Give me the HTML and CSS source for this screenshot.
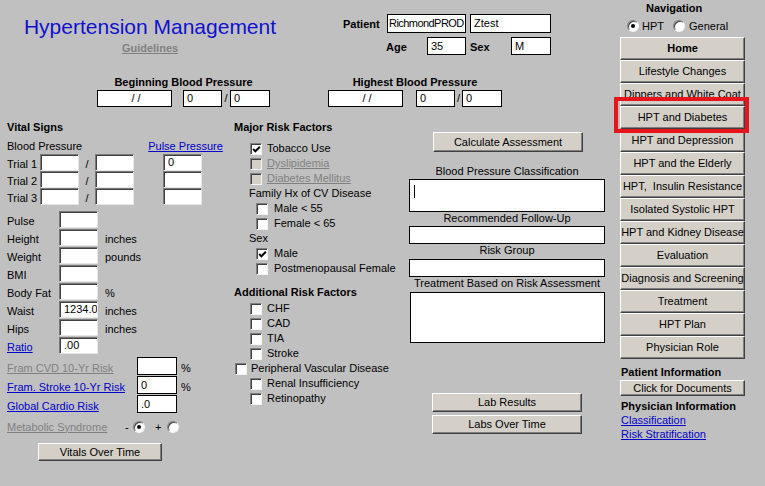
FILE: index.html
```html
<!DOCTYPE html>
<html>
<head>
<meta charset="utf-8">
<title>Hypertension Management</title>
<link rel="stylesheet" href="styles.css">
</head>
<body>
<div class="page">
  <div class="main">
    <header class="top">
      <div class="title-block">
        <h1 class="title">Hypertension Management</h1>
        <a class="guidelines">Guidelines</a>
      </div>
      <div class="patient">
        <div class="prow">
          <span class="plabel pl-patient">Patient</span>
          <span class="pf w79 h19 tight">RichmondPROD</span>
          <span class="pf w81 h19">Ztest</span>
        </div>
        <div class="prow prow2">
          <span class="plabel pl-age">Age</span>
          <span class="pf w39 h18">35</span>
          <span class="plabel pl-sex">Sex</span>
          <span class="pf w40 h18">M</span>
        </div>
      </div>
    </header>

    <section class="bp-row">
      <div class="bp-group bp-begin">
        <div class="bold center">Beginning Blood Pressure</div>
        <div class="bp-inputs">
          <span class="pf w75 h17 center">/ /</span>
          <span class="pf w39 h17 ml11">0</span>
          <span class="slash">/</span>
          <span class="pf w40 h17">0</span>
        </div>
      </div>
      <div class="bp-group bp-high">
        <div class="bold center">Highest Blood Pressure</div>
        <div class="bp-inputs">
          <span class="pf w75 h17 center">/ /</span>
          <span class="pf w39 h17 ml13">0</span>
          <span class="slash">/</span>
          <span class="pf w40 h17">0</span>
        </div>
      </div>
    </section>

    <section class="body">
      <div class="vitals">
        <div class="bold">Vital Signs</div>
        <div class="bp-head">
          <span>Blood Pressure</span>
          <a class="link pp">Pulse Pressure</a>
        </div>
        <div class="trials">
          <div class="trial"><span class="tl">Trial 1</span><span class="vf w39"></span><span class="tslash">/</span><span class="vf w39"></span><span class="vf w39 ml29">0</span></div>
          <div class="trial"><span class="tl">Trial 2</span><span class="vf w39"></span><span class="tslash">/</span><span class="vf w39"></span><span class="vf w39 ml29"></span></div>
          <div class="trial"><span class="tl">Trial 3</span><span class="vf w39"></span><span class="tslash">/</span><span class="vf w39"></span><span class="vf w39 ml29"></span></div>
        </div>
        <div class="measures">
          <div class="mrow"><span class="ml">Pulse</span><span class="vf w39"></span></div>
          <div class="mrow"><span class="ml">Height</span><span class="vf w39"></span><span class="unit">inches</span></div>
          <div class="mrow"><span class="ml">Weight</span><span class="vf w39"></span><span class="unit">pounds</span></div>
          <div class="mrow"><span class="ml">BMI</span><span class="vf w39"></span></div>
          <div class="mrow"><span class="ml">Body Fat</span><span class="vf w39"></span><span class="unit">%</span></div>
          <div class="mrow"><span class="ml">Waist</span><span class="vf w39">1234.0</span><span class="unit">inches</span></div>
          <div class="mrow"><span class="ml">Hips</span><span class="vf w39"></span><span class="unit">inches</span></div>
          <div class="mrow"><span class="ml"><a class="link">Ratio</a></span><span class="vf w39">.00</span></div>
        </div>
        <div class="risks-calc">
          <div class="frow"><span class="fl"><a class="dis-link">Fram CVD 10-Yr Risk</a></span><span class="pf w40 h18"></span><span class="pct">%</span></div>
          <div class="frow"><span class="fl"><a class="link">Fram. Stroke 10-Yr Risk</a></span><span class="pf w40 h18">0</span><span class="pct">%</span></div>
          <div class="frow"><span class="fl"><a class="link">Global Cardio Risk</a></span><span class="pf w40 h18">.0</span></div>
        </div>
        <div class="meta">
          <a class="dis-link meta-l">Metabolic Syndrome</a>
          <span class="sign">-</span>
          <span class="radio on"></span>
          <span class="sign plus">+</span>
          <span class="radio"></span>
        </div>
        <div class="btn vot">Vitals Over Time</div>
      </div>

      <div class="risks">
        <div class="bold">Major Risk Factors</div>
        <div class="cblist">
          <div class="cbrow l1"><span class="cb on"><svg viewBox="0 0 8 8"><path d="M1 3.6 L3 5.6 L7 1.6"/></svg></span>Tobacco Use</div>
          <div class="cbrow l1"><span class="cb dis"></span><a class="dis-link">Dyslipidemia</a></div>
          <div class="cbrow l1"><span class="cb dis"></span><a class="dis-link">Diabetes Mellitus</a></div>
          <div class="cbrow lt">Family Hx of CV Disease</div>
          <div class="cbrow l2"><span class="cb"></span>Male &lt; 55</div>
          <div class="cbrow l2"><span class="cb"></span>Female &lt; 65</div>
          <div class="cbrow lt">Sex</div>
          <div class="cbrow l2"><span class="cb on"><svg viewBox="0 0 8 8"><path d="M1 3.6 L3 5.6 L7 1.6"/></svg></span>Male</div>
          <div class="cbrow l2"><span class="cb"></span>Postmenopausal Female</div>
        </div>
        <div class="bold add-title">Additional Risk Factors</div>
        <div class="cblist add-list">
          <div class="cbrow l1"><span class="cb"></span>CHF</div>
          <div class="cbrow l1"><span class="cb"></span>CAD</div>
          <div class="cbrow l1"><span class="cb"></span>TIA</div>
          <div class="cbrow l1"><span class="cb"></span>Stroke</div>
          <div class="cbrow l0"><span class="cb"></span>Peripheral Vascular Disease</div>
          <div class="cbrow l1"><span class="cb"></span>Renal Insufficiency</div>
          <div class="cbrow l1"><span class="cb"></span>Retinopathy</div>
        </div>
      </div>

      <div class="results">
        <div class="btn calc">Calculate Assessment</div>
        <div class="rlabel first">Blood Pressure Classification</div>
        <div class="rbox h33"><span class="caret"></span></div>
        <div class="rlabel">Recommended Follow-Up</div>
        <div class="rbox h18"></div>
        <div class="rlabel">Risk Group</div>
        <div class="rbox h18 mt2"></div>
        <div class="rlabel">Treatment Based on Risk Assessment</div>
        <div class="rbox h51 mt2 shift"></div>
        <div class="btn lab first-lab">Lab Results</div>
        <div class="btn lab">Labs Over Time</div>
      </div>
    </section>
  </div>

  <nav class="nav">
    <div class="bold nav-title">Navigation</div>
    <div class="nav-radios">
      <span class="radio on"></span><span class="rtext">HPT</span>
      <span class="radio r2"></span><span class="rtext">General</span>
    </div>
    <div class="nav-buttons">
      <div class="btn nb bold">Home</div>
      <div class="btn nb">Lifestyle Changes</div>
      <div class="btn nb">Dippers and White Coat</div>
      <div class="btn nb hl">HPT and Diabetes<span class="highlight"></span></div>
      <div class="btn nb">HPT and Depression</div>
      <div class="btn nb">HPT and the Elderly</div>
      <div class="btn nb">HPT,&nbsp; Insulin Resistance</div>
      <div class="btn nb">Isolated Systolic HPT</div>
      <div class="btn nb">HPT and Kidney Disease</div>
      <div class="btn nb">Evaluation</div>
      <div class="btn nb">Diagnosis and Screening</div>
      <div class="btn nb">Treatment</div>
      <div class="btn nb">HPT Plan</div>
      <div class="btn nb">Physician Role</div>
    </div>
    <div class="bold pi-title">Patient Information</div>
    <div class="btn docs">Click for Documents</div>
    <div class="bold phys-title">Physician Information</div>
    <a class="link nav-link">Classification</a>
    <a class="link nav-link">Risk Stratification</a>
  </nav>
</div>
</body>
</html>
```

FILE: styles.css
```css
* { box-sizing: border-box; }

html, body {
  margin: 0;
  padding: 0;
}

body {
  width: 765px;
  height: 486px;
  overflow: hidden;
  background: #c0c0c0;
  font-family: "Liberation Sans", Arial, sans-serif;
  font-size: 11px;
  line-height: 13px;
  color: #000;
}

.page { display: flex; }
.main { width: 620px; flex: none; }

.bold { font-weight: bold; }
.center { text-align: center; justify-content: center; }

.link { color: #0000c8; text-decoration: underline; white-space: nowrap; }
.dis-link { color: #808080; text-decoration: underline; white-space: nowrap; }

/* ---------- header ---------- */
.top {
  display: flex;
  align-items: flex-start;
  height: 63px;
}
.title-block {
  margin: 15px 0 0 20px;
  width: 260px;
  text-align: center;
}
.title {
  margin: 0;
  font-size: 21px;
  line-height: 24px;
  font-weight: normal;
  color: #1010d0;
  white-space: nowrap;
}
.guidelines {
  display: inline-block;
  margin-top: 3px;
  font-weight: bold;
  color: #808080;
  text-decoration: underline;
}
.patient {
  margin: 14px 0 0 63px;
  display: flex;
  flex-direction: column;
  gap: 4px;
}
.prow { display: flex; align-items: center; }
.prow2 { padding-left: 43px; }
.plabel { font-weight: bold; white-space: nowrap; padding-top: 2px; }
.pl-patient { width: 44px; }
.pl-age { width: 41px; }
.pl-sex { width: 41px; margin-left: 4px; }
.prow .pf + .pf { margin-left: 4px; }

/* generic fields */
.pf {
  display: flex;
  align-items: center;
  flex: none;
  background: #fff;
  border: 1px solid #000;
  padding-left: 3px;
  white-space: nowrap;
  overflow: hidden;
}
.pf.tight { padding-left: 1px; letter-spacing: -0.55px; }
.vf {
  display: flex;
  align-items: center;
  flex: none;
  height: 17px;
  background: #fff;
  border: 1px solid;
  border-color: #7a7a7a #e6e6e6 #e6e6e6 #7a7a7a;
  box-shadow: inset 1px 1px 0 #404040;
  padding-left: 4px;
  white-space: nowrap;
  overflow: hidden;
}
.w39 { width: 39px; }
.w40 { width: 40px; }
.w75 { width: 75px; }
.w79 { width: 79px; }
.w81 { width: 81px; }
.h17 { height: 17px; }
.h18 { height: 18px; }
.h19 { height: 19px; }
.ml11 { margin-left: 11px; }
.ml13 { margin-left: 13px; }
.ml29 { margin-left: 29px; }

/* ---------- blood pressure row ---------- */
.bp-row {
  display: flex;
  margin-top: 13px;
}
.bp-group { display: flex; flex-direction: column; gap: 1px; }
.bp-begin { margin-left: 97px; width: 173px; }
.bp-high { margin-left: 58px; width: 174px; }
.bp-inputs { display: flex; align-items: center; }
.slash { width: 8px; text-align: center; }

/* ---------- body ---------- */
.body {
  display: flex;
  margin-top: 14px;
}

.vitals { width: 234px; padding-left: 7px; flex: none; }
.bp-head {
  display: flex;
  margin-top: 6px;
}
.pp { margin-left: 66px; }
.trials { margin-top: 1px; }
.trial { display: flex; align-items: center; height: 17px; }
.tl { width: 33px; white-space: nowrap; }
.tslash { width: 16px; text-align: center; }
.tl, .tslash, .ml, .unit, .fl, .pct { padding-top: 3px; }

.measures { margin-top: 6px; }
.mrow { display: flex; align-items: center; height: 18px; }
.mrow .vf { margin-bottom: 1px; }
.ml { width: 52px; }
.unit { margin-left: 7px; }

.risks-calc { margin-top: 2px; }
.frow { display: flex; align-items: center; height: 19px; }
.frow .pf { margin-bottom: 1px; }
.fl { width: 130px; }
.pct { margin-left: 4px; }

.meta { display: flex; align-items: center; height: 14px; margin-top: 6px; }
.meta-l { width: 118px; }
.sign { width: 8px; }
.plus { margin-left: 12px; width: 12px; }
.meta .radio + .sign { margin-left: 10px; }

.btn {
  display: flex;
  align-items: center;
  justify-content: center;
  background: #d4d0c8;
  border: 1px solid;
  border-color: #fff #404040 #404040 #fff;
  box-shadow: inset -1px -1px 0 #808080;
  white-space: nowrap;
}
.vot { width: 124px; height: 18px; margin: 9px 0 0 31px; }

/* checkboxes & radios */
.radio {
  position: relative;
  flex: none;
  width: 12px;
  height: 12px;
  border-radius: 50%;
  background: #fff;
  border: 1px solid;
  border-color: #808080 #f4f4f4 #f4f4f4 #808080;
  box-shadow: inset 1px 1px 0 #404040;
}
.radio.on::after {
  content: "";
  position: absolute;
  left: 3px;
  top: 3px;
  width: 4px;
  height: 4px;
  border-radius: 50%;
  background: #000;
}

.risks { width: 175px; flex: none; }
.cblist { margin-top: 7px; }
.add-title { margin-top: 10px; }
.add-list { margin-top: 2px; }
.cbrow { display: flex; align-items: center; height: 15px; white-space: nowrap; }
.l0 { padding-left: 1px; }
.l1 { padding-left: 16px; }
.l2 { padding-left: 22px; }
.lt { padding-left: 15px; }
.cb {
  flex: none;
  width: 12px;
  height: 12px;
  margin-right: 5px;
  background: #fff;
  border: 1px solid;
  border-color: #808080 #f4f4f4 #f4f4f4 #808080;
  box-shadow: inset 1px 1px 0 #404040;
  display: flex;
  align-items: center;
  justify-content: center;
}
.l2 .cb { margin-right: 6px; }
.l0 .cb { margin-right: 4px; }
.cb.dis { background: #d4d0c8; }
.cb svg { width: 9px; height: 9px; margin: 1px 0 0 1px; }
.cb path { fill: none; stroke: #000; stroke-width: 1.7; }

/* results */
.results { width: 196px; flex: none; display: flex; flex-direction: column; }
.calc { width: 150px; height: 20px; margin: 11px 0 0 24px; }
.rlabel { text-align: center; height: 13px; white-space: nowrap; }
.rlabel.first { margin-top: 13px; }
.rbox {
  position: relative;
  background: #fff;
  border: 1px solid #000;
  margin-top: 1px;
}
.h33 { height: 33px; }
.h51 { height: 51px; }
.mt2 { margin-top: 2px; }
.shift { margin-left: 1px; }
.caret {
  position: absolute;
  left: 4px;
  top: 5px;
  width: 1px;
  height: 13px;
  background: #000;
}
.lab { width: 150px; height: 19px; margin: 3px 0 0 23px; }
.first-lab { margin-top: 50px; }

/* ---------- navigation ---------- */
.nav { width: 125px; flex: none; display: flex; flex-direction: column; }
.nav-title { margin-top: 2px; padding-left: 26px; }
.nav-radios { display: flex; align-items: center; height: 14px; margin-top: 4px; padding-left: 7px; }
.rtext { margin-left: 3px; }
.r2 { margin-left: 9px; }
.nav-radios .r2 + .rtext { margin-left: 4px; }
.nav-buttons { margin-top: 4px; display: flex; flex-direction: column; }
.nb { height: 23px; width: 125px; }
.hl { position: relative; }
.highlight {
  position: absolute;
  left: -7px;
  right: -5px;
  top: -10px;
  bottom: -5px;
  border: 4px solid #e8141c;
  pointer-events: none;
}
.pi-title { margin-top: 7px; padding-left: 1px; }
.docs { height: 16px; width: 125px; margin-top: 1px; }
.phys-title { margin-top: 4px; padding-left: 1px; }
.nav-link { height: 14px; line-height: 14px; padding-left: 1px; align-self: flex-start; }
```
